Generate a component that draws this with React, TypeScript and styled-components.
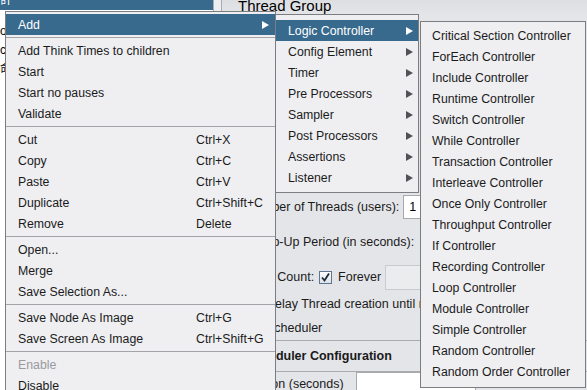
import React from 'react'
import styled, { createGlobalStyle } from 'styled-components'

const GlobalStyle = createGlobalStyle`
    html, body {
        margin: 0;
        padding: 0;
    }
    body {
        font-family: "Liberation Sans", Arial, "Noto Sans CJK SC", sans-serif;
        background: #e4e5e9;
    }
`

const Window = styled.div`
    position: relative;
    width: 587px;
    height: 390px;
    overflow: hidden;
    display: flex;
    background: #e4e5e9;
`

/* ---- tree on the left ---- */
const Tree = styled.div`
    width: 213px;
    flex: none;
    background: #fff;
    font-size: 12px;
`

const TreeItem = styled.div<{ $selected?: boolean }>`
    height: 19px;
    line-height: 19px;
    white-space: nowrap;
    color: ${(p) => (p.$selected ? '#fff' : '#000')};
    background: ${(p) => (p.$selected ? '#386a8e' : 'transparent')};
    margin: ${(p) => (p.$selected ? '-9px 0 12px' : '0')};
`

const Divider = styled.div`
    width: 7px;
    flex: none;
    background: #eceef1;
    border-left: 1px solid #a9abb0;
    border-right: 1px solid #a9abb0;
`

/* ---- thread group panel ---- */
const Panel = styled.div`
    flex: 1;
    display: flex;
    flex-direction: column;
    font-size: 12.5px;
    color: #1a1a1a;
`

const Title = styled.div`
    height: 18px;
    line-height: 18px;
    margin-top: -3px;
    padding-left: 16px;
    font-size: 15px;
    color: #000;
    background: linear-gradient(#dcdde1, #e4e5e9);
`

/* name / comments / error action: all covered by the popups */
const TopFields = styled.div`
    height: 179px;
    flex: none;
`

const Form = styled.div`
    display: flex;
    flex-direction: column;
    padding-left: 24px;
`

const Row = styled.div<{ $h: number; $gap?: number }>`
    height: ${(p) => p.$h}px;
    margin-top: ${(p) => p.$gap ?? 0}px;
    display: flex;
    align-items: center;
    gap: 4px;
    white-space: nowrap;
`

const Field = styled.div<{ $w: number; $h: number; $ml?: number; $disabled?: boolean }>`
    width: ${(p) => p.$w}px;
    height: ${(p) => p.$h}px;
    margin-left: ${(p) => p.$ml ?? 0}px;
    flex: none;
    box-sizing: border-box;
    border: 1px solid ${(p) => (p.$disabled ? '#c9cacd' : '#a7a9ad')};
    background: ${(p) => (p.$disabled ? '#ebecee' : '#fff')};
    padding: 0 5px;
    display: flex;
    align-items: center;
    color: #000;
`

const Check = styled.span`
    width: 13px;
    height: 13px;
    flex: none;
    box-sizing: border-box;
    border: 1px solid #5d7591;
    background: linear-gradient(#fdfdfe, #dde3ea);
    display: inline-flex;
    align-items: center;
    justify-content: center;
    margin: 0 2px 0 1px;
`

const SchedulerBox = styled.div`
    margin-top: 2px;
    border-top: 1px solid #a9abb0;
    padding-left: 16px;
`

const Heading = styled.div`
    height: 30px;
    line-height: 30px;
    padding-left: 8px;
    font-weight: bold;
    border-bottom: 1px solid #a9abb0;
`

/* ---- popup menus ---- */
const Menu = styled.div<{ $left: number; $top: number; $width: number; $pt: number; $pb: number }>`
    position: absolute;
    left: ${(p) => p.$left}px;
    top: ${(p) => p.$top}px;
    width: ${(p) => p.$width}px;
    box-sizing: border-box;
    padding: ${(p) => p.$pt}px 0 ${(p) => p.$pb}px;
    background: #efeff2;
    border: 1px solid #7c7d80;
    font-size: 12.3px;
    color: #1b1b1b;
    z-index: 2;
`

const Item = styled.div<{ $active?: boolean; $disabled?: boolean; $pl: number }>`
    height: 21px;
    display: flex;
    align-items: center;
    padding-left: ${(p) => p.$pl}px;
    white-space: nowrap;
    background: ${(p) => (p.$active ? '#386a8e' : 'transparent')};
    color: ${(p) => (p.$active ? '#fff' : p.$disabled ? '#9a9a9e' : '#1b1b1b')};
`

const Label = styled.span<{ $w?: number }>`
    width: ${(p) => (p.$w ? `${p.$w}px` : 'auto')};
    flex: ${(p) => (p.$w ? 'none' : '1')};
`

const Arrow = styled.span<{ $light?: boolean; $mr: number }>`
    width: 0;
    height: 0;
    margin-left: auto;
    margin-right: ${(p) => p.$mr}px;
    border-top: 4.5px solid transparent;
    border-bottom: 4.5px solid transparent;
    border-left: 7px solid ${(p) => (p.$light ? '#fff' : '#505256')};
`

const Sep = styled.div`
    height: 5px;
    display: flex;
    align-items: center;
    &::after {
        content: '';
        flex: 1;
        height: 1px;
        background: #a3a4a8;
    }
`

type Entry =
    | 'sep'
    | { label: string; key?: string; sub?: boolean; active?: boolean; disabled?: boolean }

const mainItems: Entry[] = [
    { label: 'Add', sub: true, active: true },
    'sep',
    { label: 'Add Think Times to children' },
    { label: 'Start' },
    { label: 'Start no pauses' },
    { label: 'Validate' },
    'sep',
    { label: 'Cut', key: 'Ctrl+X' },
    { label: 'Copy', key: 'Ctrl+C' },
    { label: 'Paste', key: 'Ctrl+V' },
    { label: 'Duplicate', key: 'Ctrl+Shift+C' },
    { label: 'Remove', key: 'Delete' },
    'sep',
    { label: 'Open...' },
    { label: 'Merge' },
    { label: 'Save Selection As...' },
    'sep',
    { label: 'Save Node As Image', key: 'Ctrl+G' },
    { label: 'Save Screen As Image', key: 'Ctrl+Shift+G' },
    'sep',
    { label: 'Enable', disabled: true },
    { label: 'Disable' },
]

const addItems: Entry[] = [
    { label: 'Logic Controller', sub: true, active: true },
    { label: 'Config Element', sub: true },
    { label: 'Timer', sub: true },
    { label: 'Pre Processors', sub: true },
    { label: 'Sampler', sub: true },
    { label: 'Post Processors', sub: true },
    { label: 'Assertions', sub: true },
    { label: 'Listener', sub: true },
]

const controllerItems: Entry[] = [
    'Critical Section Controller',
    'ForEach Controller',
    'Include Controller',
    'Runtime Controller',
    'Switch Controller',
    'While Controller',
    'Transaction Controller',
    'Interleave Controller',
    'Once Only Controller',
    'Throughput Controller',
    'If Controller',
    'Recording Controller',
    'Loop Controller',
    'Module Controller',
    'Simple Controller',
    'Random Controller',
    'Random Order Controller',
].map((label) => ({ label }))

interface PopupProps {
    items: Entry[]
    left: number
    top: number
    width: number
    pt: number
    pb: number
    pl: number
    arrowGap: number
    labelWidth?: number
}

function Popup({ items, left, top, width, pt, pb, pl, arrowGap, labelWidth }: PopupProps) {
    return (
        <Menu $left={left} $top={top} $width={width} $pt={pt} $pb={pb}>
            {items.map((it, i) =>
                it === 'sep' ? (
                    <Sep key={i} />
                ) : (
                    <Item key={i} $pl={pl} $active={it.active} $disabled={it.disabled}>
                        <Label $w={it.key ? labelWidth : undefined}>{it.label}</Label>
                        {it.key && <span>{it.key}</span>}
                        {it.sub && <Arrow $light={it.active} $mr={arrowGap} />}
                    </Item>
                )
            )}
        </Menu>
    )
}

const CheckMark = () => (
    <svg width="11" height="11" viewBox="0 0 11 11">
        <path d="M2 5.5 L4.5 8.5 L9 1.5" fill="none" stroke="#1d2b3a" strokeWidth="1.8" />
    </svg>
)

export default function App() {
    return (
        <>
            <GlobalStyle />
            <Window>
                <Tree>
                    <TreeItem $selected>計</TreeItem>
                    <TreeItem>o</TreeItem>
                    <TreeItem>c</TreeItem>
                    <TreeItem>命</TreeItem>
                </Tree>
                <Divider />
                <Panel>
                    <Title>Thread Group</Title>
                    <TopFields />
                    <Form>
                        <Row $h={25}>
                            Number of Threads (users):
                            <Field $w={60} $h={24}>1</Field>
                        </Row>
                        <Row $h={25} $gap={10}>
                            Ramp-Up Period (in seconds):
                            <Field $w={60} $h={24} $ml={4}>1</Field>
                        </Row>
                        <Row $h={26} $gap={10}>
                            Loop Count:
                            <Check>
                                <CheckMark />
                            </Check>
                            Forever
                            <Field $w={60} $h={25} $disabled />
                        </Row>
                        <Row $h={20} $gap={4}>
                            <Check />
                            Delay Thread creation until needed
                        </Row>
                        <Row $h={20} $gap={4}>
                            <Check />
                            Scheduler
                        </Row>
                    </Form>
                    <SchedulerBox>
                        <Heading>Scheduler Configuration</Heading>
                        <Row $h={24}>
                            Duration (seconds)
                            <Field $w={120} $h={24} $ml={8} />
                        </Row>
                    </SchedulerBox>
                </Panel>

                <Popup items={mainItems} left={5} top={11} width={271} pt={2} pb={4} pl={12} arrowGap={6} labelWidth={178} />
                <Popup items={addItems} left={275} top={14} width={144} pt={5} pb={4} pl={12} arrowGap={5} />
                <Popup items={controllerItems} left={420} top={21} width={166} pt={3} pb={5} pl={11} arrowGap={5} />
            </Window>
        </>
    )
}
